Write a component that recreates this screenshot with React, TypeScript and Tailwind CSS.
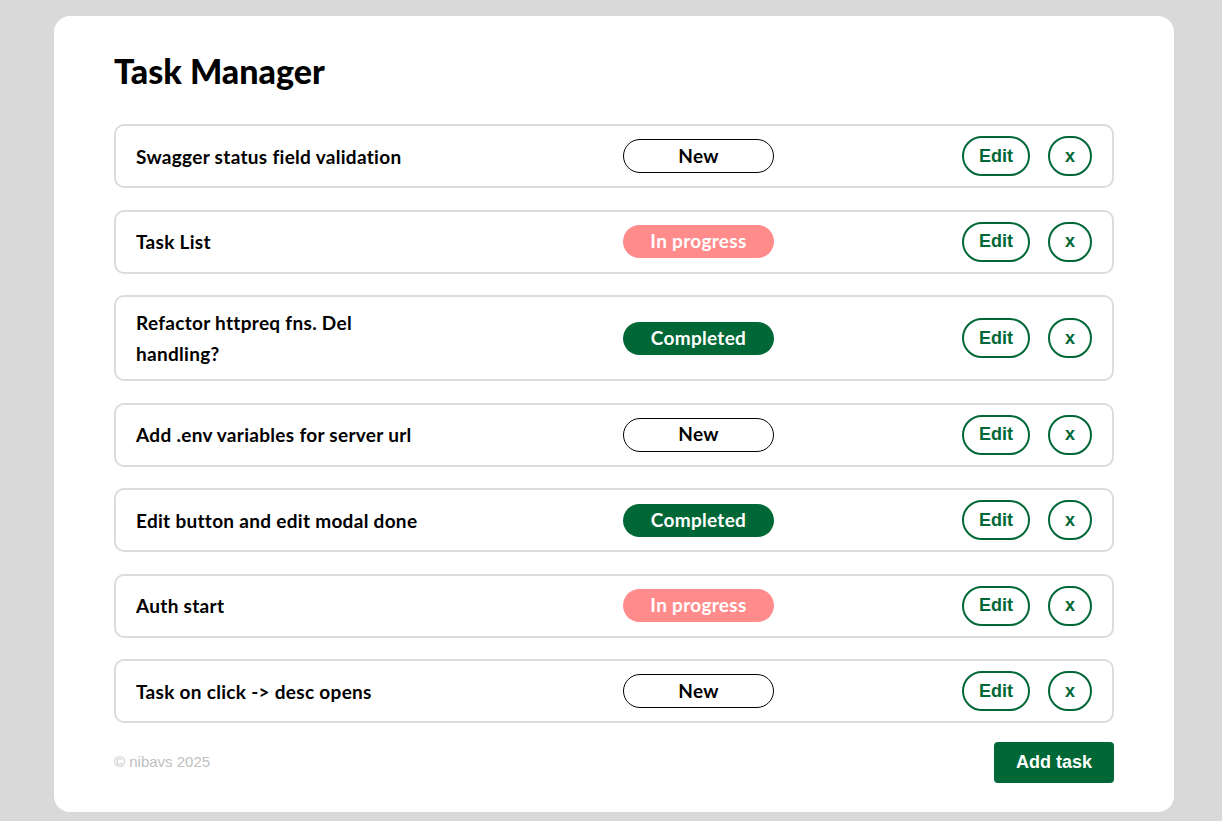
import React from "react";

type Status = "New" | "In progress" | "Completed";

const tasks: { title: string; status: Status }[] = [
  { title: "Swagger status field validation", status: "New" },
  { title: "Task List", status: "In progress" },
  { title: "Refactor httpreq fns. Del handling?", status: "Completed" },
  { title: "Add .env variables for server url", status: "New" },
  { title: "Edit button and edit modal done", status: "Completed" },
  { title: "Auth start", status: "In progress" },
  { title: "Task on click -> desc opens", status: "New" },
];

function Pill({ status }: { status: Status }) {
  if (status === "New") {
    return (
      <div className="w-[151px] h-[34px] rounded-full border border-black bg-white text-black flex items-center justify-center text-[19px] tracking-[0.3px] font-bold font-['Lato',sans-serif]">
        New
      </div>
    );
  }
  if (status === "In progress") {
    return (
      <div className="w-[151px] h-[33px] rounded-full bg-[#ff8b8b] text-white flex items-center justify-center text-[19px] tracking-[0.3px] font-bold font-['Lato',sans-serif]">
        In progress
      </div>
    );
  }
  return (
    <div className="w-[151px] h-[33px] rounded-full bg-[#006837] text-white flex items-center justify-center text-[19px] tracking-[0.3px] font-bold font-['Lato',sans-serif]">
      Completed
    </div>
  );
}

export default function App() {
  return (
    <div className="min-h-[821px] bg-[#d9d9d9] pt-4 pl-[54px] pb-[9px]">
      <div className="w-[1120px] bg-white rounded-[16px] px-[60px] pt-[36px] pb-[29px]">
        <h1 className="text-[34px] leading-[38px] font-black text-black font-['Lato',sans-serif] mb-[34px]">
          Task Manager
        </h1>
        <div className="flex flex-col gap-[21.5px]">
          {tasks.map((t, i) => (
            <div
              key={i}
              className="border-2 border-[#dcdcdc] rounded-[10px] px-5 py-[10px] grid grid-cols-[487px_151px_1fr] items-center"
            >
              <div className="max-w-[290px] text-[19px] tracking-[0.3px] leading-[31px] font-bold text-black font-['Lato',sans-serif]">
                {t.title}
              </div>
              <Pill status={t.status} />
              <div className="flex justify-end items-center gap-[18px]">
                <button className="w-[68px] h-[40px] rounded-full border-2 border-[#006837] text-[#006837] text-[18px] font-bold font-['Liberation_Sans',Arial,sans-serif] flex items-center justify-center">
                  Edit
                </button>
                <button className="w-[44px] h-[40px] rounded-full border-2 border-[#006837] text-[#006837] text-[18px] font-bold font-['Liberation_Sans',Arial,sans-serif] flex items-center justify-center">
                  x
                </button>
              </div>
            </div>
          ))}
        </div>
        <div className="mt-[19px] flex items-center justify-between">
          <span className="text-[15px] text-[#c0c0c0] font-['Liberation_Sans',Arial,sans-serif]">
            © nibavs 2025
          </span>
          <button className="w-[120px] h-[41px] rounded-[4px] bg-[#006837] text-white text-[18px] font-bold font-['Liberation_Sans',Arial,sans-serif]">
            Add task
          </button>
        </div>
      </div>
    </div>
  );
}
